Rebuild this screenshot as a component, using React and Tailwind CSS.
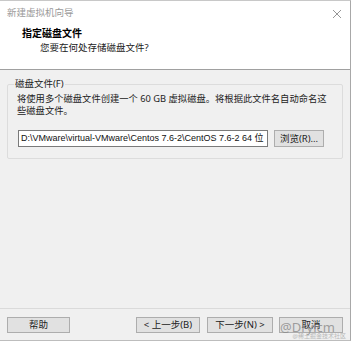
import React from 'react';

const font = { fontFamily: '"Noto Sans", "Noto Sans CJK SC", sans-serif' };

const Btn = ({ children, className = '' }) => (
	<button
		className={`h-[16px] bg-[#e1e1e1] border border-[#adadad] text-[9.5px] leading-none text-[#222] flex items-center justify-center whitespace-nowrap ${className}`}
	>
		{children}
	</button>
);

const App = () => {
	return (
		<div
			className="relative w-[351px] h-[341px] bg-[#f0f0f0] border-t border-t-[#c8c8c8] border-r border-r-[#a8a8a8] border-b border-b-[#bdbdbd] flex flex-col overflow-hidden"
			style={font}
		>
			{/* header */}
			<div className="bg-white h-[69px] border-b border-[#a0a0a0] shrink-0 flex flex-col">
				<div className="h-[25px] flex items-center justify-between pl-[7px] pr-[8px]">
					<span className="text-[9.5px] text-[#9a9a9a]">新建虚拟机向导</span>
					<svg width="10" height="10" viewBox="0 0 10 10" className="stroke-[#8a8a8a]">
						<path d="M1 1 L9 9 M9 1 L1 9" strokeWidth="0.9" fill="none" />
					</svg>
				</div>
				<div className="pl-[22px] text-[10px] leading-[14px] font-bold text-black">指定磁盘文件</div>
				<div className="pl-[40px] mt-[1px] text-[9.5px] leading-[14px] text-[#222]">
					您要在何处存储磁盘文件?
				</div>
			</div>

			{/* body */}
			<div className="flex-1 px-[7px] pt-[8px]">
				<fieldset className="border border-[#dcdcdc] px-[9px] pt-[3px] pb-[11px] rounded-[2px]">
					<legend className="text-[9.5px] leading-[12px] text-[#222] px-[1px] -ml-[3px]">磁盘文件(F)</legend>
					<div className="text-[9.3px] leading-[12px] text-[#222] whitespace-nowrap">
						将使用多个磁盘文件创建一个 60 GB 虚拟磁盘。将根据此文件名自动命名这
						<br />
						些磁盘文件。
					</div>
					<div className="flex items-center mt-[13px] gap-[6px] pl-[1px]">
						<div
							className="w-[250px] h-[17px] bg-white border border-[#7a7a7a] px-[2px] text-[9px] leading-[15px] text-[#111] whitespace-nowrap overflow-hidden"
							style={{ fontFamily: '"Liberation Sans", "Noto Sans CJK SC", sans-serif' }}
						>
							D:\VMware\virtual-VMware\Centos 7.6-2\CentOS 7.6-2 64 位
						</div>
						<Btn className="w-[50px] !h-[17px]">浏览(R)...</Btn>
					</div>
				</fieldset>
			</div>

			{/* footer */}
			<div className="shrink-0 border-t border-[#dadada] h-[32px] pt-[8px] px-[7px] flex">
				<Btn className="w-[63px]">帮助</Btn>
				<div className="flex-1" />
				<Btn className="w-[64px]">&lt; 上一步(B)</Btn>
				<Btn className="w-[66px] ml-[7px]">下一步(N) &gt;</Btn>
				<Btn className="w-[64px] ml-[6px]">取消</Btn>
			</div>

			{/* watermark */}
			<div className="absolute right-[15px] bottom-[6px] text-[13px] leading-none text-[#8a8a8a]/80 pointer-events-none">
				@Dryicm
			</div>
			<div className="absolute right-[4px] bottom-[1px] text-[6px] leading-none text-[#b8b8b8] pointer-events-none">
				@稀土掘金技术社区
			</div>
		</div>
	);
};

export default App;
